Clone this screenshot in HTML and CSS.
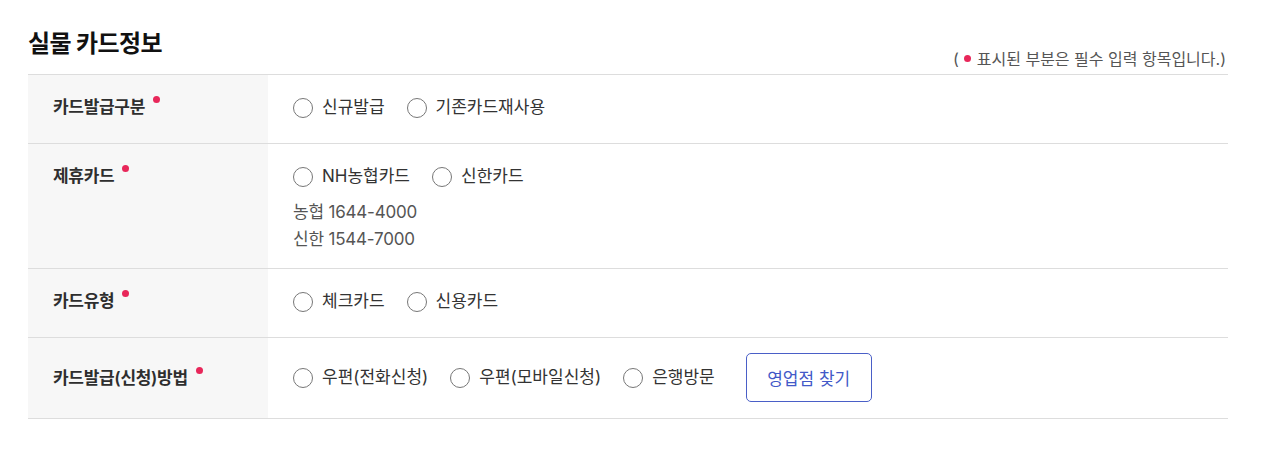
FILE: index.html
```html
<!DOCTYPE html>
<html lang="ko">
<head>
<meta charset="utf-8">
<link rel="stylesheet" href="styles.css">
</head>
<body>
<section class="card-info">
  <div class="head">
    <h2 class="title">실물 카드정보</h2>
    <p class="note">( <span class="dot inline"></span> 표시된 부분은 필수 입력 항목입니다.)</p>
  </div>
  <div class="table">
    <div class="row">
      <div class="th"><span class="label">카드발급구분<span class="dot"></span></span></div>
      <div class="td">
        <div class="options">
          <label class="opt"><span class="radio"></span>신규발급</label>
          <label class="opt"><span class="radio"></span>기존카드재사용</label>
        </div>
      </div>
    </div>
    <div class="row row-multi">
      <div class="th"><span class="label">제휴카드<span class="dot"></span></span></div>
      <div class="td">
        <div class="options">
          <label class="opt"><span class="radio"></span>NH농협카드</label>
          <label class="opt"><span class="radio"></span>신한카드</label>
        </div>
        <ul class="phones">
          <li>농협 1644-4000</li>
          <li>신한 1544-7000</li>
        </ul>
      </div>
    </div>
    <div class="row">
      <div class="th"><span class="label">카드유형<span class="dot"></span></span></div>
      <div class="td">
        <div class="options">
          <label class="opt"><span class="radio"></span>체크카드</label>
          <label class="opt"><span class="radio"></span>신용카드</label>
        </div>
      </div>
    </div>
    <div class="row row-btn">
      <div class="th center"><span class="label">카드발급(신청)방법<span class="dot"></span></span></div>
      <div class="td">
        <div class="options">
          <label class="opt"><span class="radio"></span>우편(전화신청)</label>
          <label class="opt"><span class="radio"></span>우편(모바일신청)</label>
          <label class="opt"><span class="radio"></span>은행방문</label>
          <button class="btn">영업점 찾기</button>
        </div>
      </div>
    </div>
  </div>
</section>
</body>
</html>
```

FILE: styles.css
```css
* { box-sizing: border-box; }
body {
  margin: 0;
  background: #fff;
  font-family: Inter, "Noto Sans CJK KR", sans-serif;
  color: #333;
}
.card-info {
  width: 1200px;
  margin-left: 28px;
  padding-top: 28px;
}
.head {
  display: flex;
  justify-content: space-between;
  align-items: flex-end;
}
.title {
  margin: 0 0 14px;
  font-size: 24px;
  font-weight: 700;
  line-height: 32px;
  color: #111;
  letter-spacing: -0.6px;
}
.note {
  margin: 0 2px 4px 0;
  font-size: 16px;
  line-height: 22px;
  color: #555;
  letter-spacing: 0;
}
.label {
  display: inline-block;
}
.dot {
  display: inline-block;
  width: 7px;
  height: 7px;
  border-radius: 50%;
  background: #e8275a;
  margin-left: 8px;
  vertical-align: top;
  margin-top: 2px;
}
.dot.inline {
  margin: 0 1px;
  vertical-align: 3px;
}
.table {
  border-top: 1px solid #ddd;
}
.row {
  display: grid;
  grid-template-columns: 240px 1fr;
  border-bottom: 1px solid #ddd;
}
.th {
  background: #f7f7f7;
  padding: 19px 25px;
  font-size: 17px;
  font-weight: 600;
  line-height: 27px;
  color: #2e2e2e;
  letter-spacing: -0.3px;
  display: flex;
  align-items: flex-start;
}
.th.center { align-items: center; }
.td {
  padding: 19px 25px 22px;
}
.row-multi .td { padding-bottom: 15px; }
.row-btn .td { padding: 15px 25px 16px; }
.options {
  display: flex;
  align-items: center;
  gap: 22px;
  font-size: 17px;
  line-height: 27px;
  color: #333;
  letter-spacing: 0;
}
.opt {
  display: flex;
  align-items: center;
  gap: 9px;
}
.radio {
  width: 20px;
  height: 20px;
  border: 1px solid #777;
  border-radius: 50%;
  background: #fff;
  flex: none;
}
.phones {
  list-style: none;
  margin: 9px 0 0;
  padding: 0;
  font-size: 17px;
  line-height: 27px;
  color: #555;
  letter-spacing: -0.2px;
}
.btn {
  margin-left: 9px;
  width: 126px;
  height: 49px;
  border: 1px solid #4a5fc7;
  border-radius: 5px;
  background: #fff;
  color: #4259c8;
  font-family: inherit;
  font-size: 17px;
  letter-spacing: 0;
  cursor: pointer;
}
```
